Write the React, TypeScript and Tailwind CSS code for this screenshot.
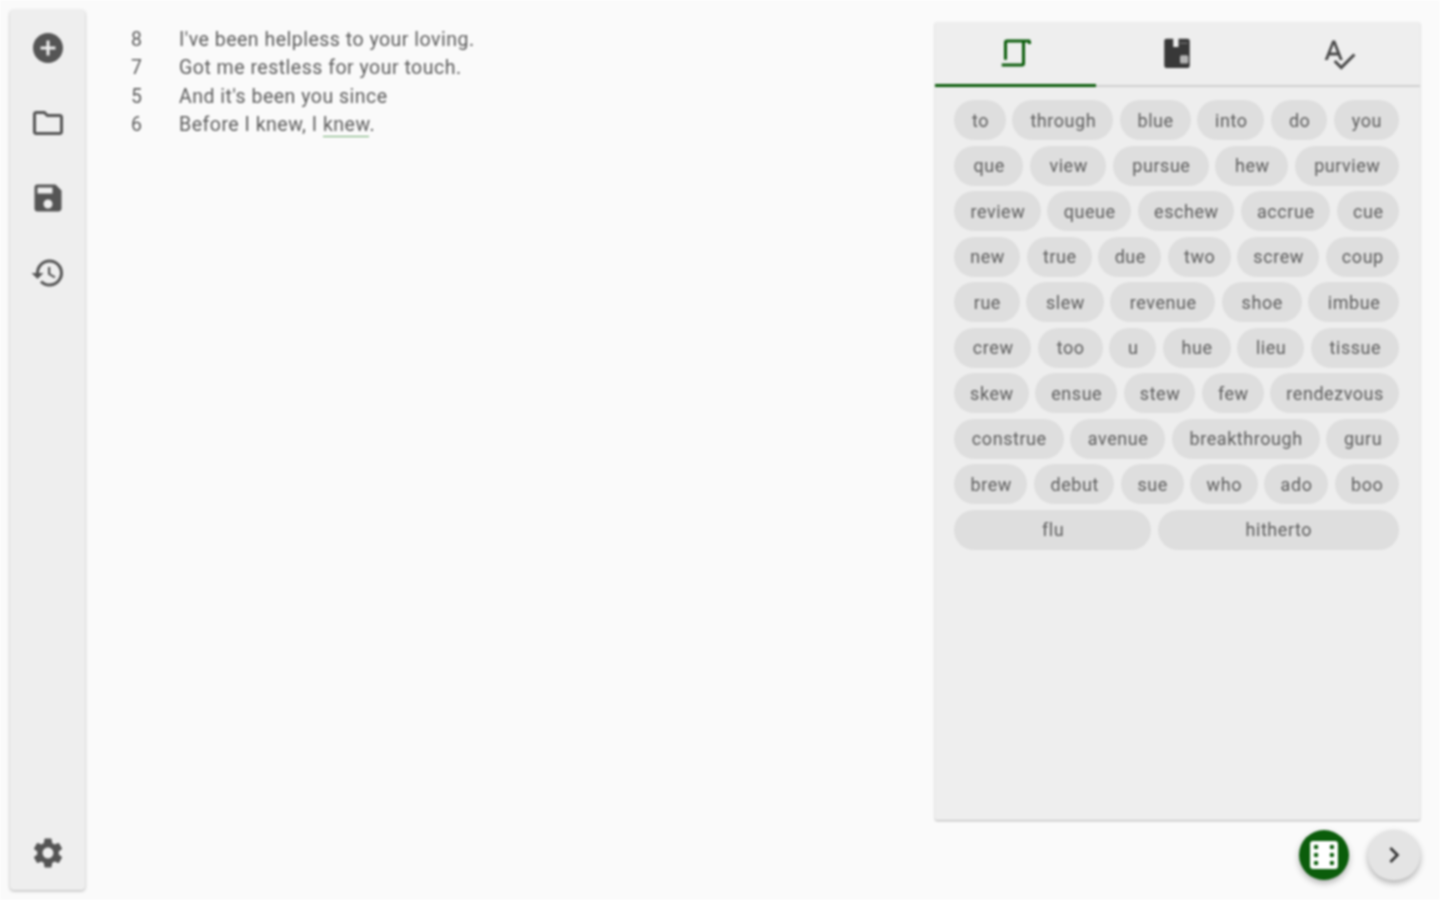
import { MdAddCircle, MdOutlineFolder, MdSave, MdHistory, MdSettings, MdSpellcheck, MdChevronRight } from "react-icons/md";

const rows = [
  ["to", "through", "blue", "into", "do", "you"],
  ["que", "view", "pursue", "hew", "purview"],
  ["review", "queue", "eschew", "accrue", "cue"],
  ["new", "true", "due", "two", "screw", "coup"],
  ["rue", "slew", "revenue", "shoe", "imbue"],
  ["crew", "too", "u", "hue", "lieu", "tissue"],
  ["skew", "ensue", "stew", "few", "rendezvous"],
  ["construe", "avenue", "breakthrough", "guru"],
  ["brew", "debut", "sue", "who", "ado", "boo"],
  ["flu", "hitherto"],
];

const lines = [
  ["8", "I've been helpless to your loving."],
  ["7", "Got me restless for your touch."],
  ["5", "And it's been you since"],
];

function ScrollIcon() {
  return (
    <svg width="36" height="36" viewBox="0 0 24 24" fill="none" stroke="#0b5d0b" strokeWidth="2">
      <path d="M5 16.5V5a1 1 0 0 1 1-1h15.5" />
      <path d="M17 4v15a1 1 0 0 1-1 1H2.5" />
      <path d="M21 4v2" />
    </svg>
  );
}

function FileIcon() {
  return (
    <svg width="36" height="36" viewBox="0 0 24 24" fill="#383838">
      <path fillRule="evenodd" d="M5 2.5h4.5V8H13V2.5h6a1.5 1.5 0 0 1 1.5 1.5v16.5a1.5 1.5 0 0 1-1.5 1.5H5a1.5 1.5 0 0 1-1.5-1.5V4A1.5 1.5 0 0 1 5 2.5z" />
      <rect x="14" y="13.5" width="5.5" height="5.5" rx="1" fill="#b4b4b4" />
      <rect x="14" y="5" width="5" height="1" fill="#6b6b6b" />
    </svg>
  );
}

function DiceIcon() {
  return (
    <svg width="36" height="36" viewBox="0 0 24 24">
      <rect x="2.7" y="2.7" width="18.6" height="18.6" rx="2" fill="#fff" />
      {[6.7, 17.3].map((x) =>
        [6.7, 12, 17.3].map((y) => <circle key={`${x}-${y}`} cx={x} cy={y} r="1.5" fill="#0b5d0b" />)
      )}
    </svg>
  );
}

export default function App() {
  return (
    <div className="h-[900px] w-[1440px] overflow-hidden bg-[#fafafa] font-['Roboto',sans-serif] text-[#5c5c5c] flex pl-[10px] pr-[20px] py-[10px] blur-[0.8px]">
      <aside className="w-[75px] h-[880px] shrink-0 bg-[#eeeeee] rounded-[4px] shadow-[0_1px_3px_rgba(0,0,0,0.3)] flex flex-col items-center pt-[20px] pb-[19px] text-[#555555]">
        <div className="flex flex-col gap-[39px]">
          <MdAddCircle size={36} />
          <MdOutlineFolder size={36} />
          <MdSave size={36} />
          <MdHistory size={36} />
        </div>
        <div className="mt-auto">
          <MdSettings size={36} />
        </div>
      </aside>

      <main className="flex-1 pl-[46px] pt-[16px] text-[19.5px] tracking-[0.5px] leading-[28.3px]">
        {lines.map(([n, t]) => (
          <div key={n} className="flex">
            <span className="w-[48px]">{n}</span>
            <span>{t}</span>
          </div>
        ))}
        <div className="flex">
          <span className="w-[48px]">6</span>
          <span>
            Before I knew, I <span className="border-b border-[#6aa86a]">knew</span>.
          </span>
        </div>
      </main>

      <div className="w-[485px] shrink-0 flex flex-col pt-[12px]">
        <section className="h-[798px] bg-[#eeeeee] rounded-[2px] shadow-[0_1px_2px_rgba(0,0,0,0.3)] flex flex-col">
          <div className="h-[65px] flex border-b-2 border-[#cfcfcf] shrink-0">
            <div className="w-[161px] h-[65px] border-b-[3px] border-[#0b5d0b] flex items-center justify-center">
              <ScrollIcon />
            </div>
            <div className="w-[162px] pb-[2px] flex items-center justify-center">
              <FileIcon />
            </div>
            <div className="w-[162px] flex items-center justify-center text-[#4a4a4a]">
              <MdSpellcheck size={36} />
            </div>
          </div>
          <div className="pl-[19px] pr-[21px] pt-[13px] flex flex-col gap-[5.5px]">
            {rows.map((row, i) => (
              <div key={i} className="flex gap-[6.5px]">
                {row.map((w) => (
                  <div
                    key={w}
                    className="grow h-[40px] pl-[16px] pr-[15px] rounded-full bg-[#dedede] flex items-center justify-center text-[18px] tracking-[0.55px] text-[#5c5c5c]"
                  >
                    {w}
                  </div>
                ))}
              </div>
            ))}
          </div>
        </section>
        <div className="flex justify-end items-center gap-[19px] pt-[10px]">
          <button className="w-[50px] h-[50px] rounded-full bg-[#0b5d0b] flex items-center justify-center shadow-[0_3px_6px_rgba(0,0,0,0.3)]">
            <DiceIcon />
          </button>
          <button className="w-[52px] h-[50px] rounded-full bg-[#e4e4e4] flex items-center justify-center text-[#333333] shadow-[0_3px_6px_rgba(0,0,0,0.3)]">
            <MdChevronRight size={32} />
          </button>
        </div>
      </div>
    </div>
  );
}
